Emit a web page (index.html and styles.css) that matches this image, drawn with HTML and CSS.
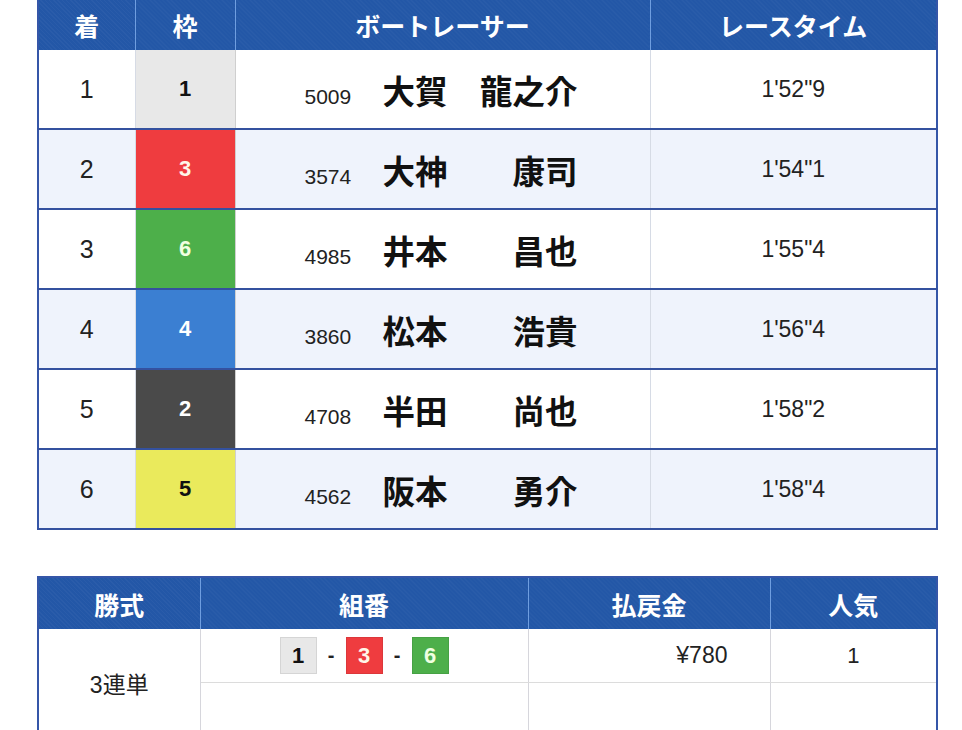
FILE: index.html
```html
<!DOCTYPE html>
<html lang="ja">
<head>
<meta charset="utf-8">
<title>レース結果</title>
<link rel="stylesheet" href="styles.css">
</head>
<body>
<main class="page">
  <table class="result">
    <colgroup>
      <col class="c-rank"><col class="c-boat"><col class="c-racer"><col class="c-time">
    </colgroup>
    <thead>
      <tr><th>着</th><th>枠</th><th>ボートレーサー</th><th>レースタイム</th></tr>
    </thead>
    <tbody>
      <tr>
        <td class="rank">1</td><td class="boat b1">1</td>
        <td class="racer"><span class="reg">5009</span><span class="name">大賀　龍之介</span></td>
        <td class="time">1'52"9</td>
      </tr>
      <tr class="alt">
        <td class="rank">2</td><td class="boat b3">3</td>
        <td class="racer"><span class="reg">3574</span><span class="name">大神　　康司</span></td>
        <td class="time">1'54"1</td>
      </tr>
      <tr>
        <td class="rank">3</td><td class="boat b6">6</td>
        <td class="racer"><span class="reg">4985</span><span class="name">井本　　昌也</span></td>
        <td class="time">1'55"4</td>
      </tr>
      <tr class="alt">
        <td class="rank">4</td><td class="boat b4">4</td>
        <td class="racer"><span class="reg">3860</span><span class="name">松本　　浩貴</span></td>
        <td class="time">1'56"4</td>
      </tr>
      <tr>
        <td class="rank">5</td><td class="boat b2">2</td>
        <td class="racer"><span class="reg">4708</span><span class="name">半田　　尚也</span></td>
        <td class="time">1'58"2</td>
      </tr>
      <tr class="alt">
        <td class="rank">6</td><td class="boat b5">5</td>
        <td class="racer"><span class="reg">4562</span><span class="name">阪本　　勇介</span></td>
        <td class="time">1'58"4</td>
      </tr>
    </tbody>
  </table>

  <table class="payout">
    <colgroup>
      <col class="p-type"><col class="p-combo"><col class="p-pay"><col class="p-pop">
    </colgroup>
    <thead>
      <tr><th>勝式</th><th>組番</th><th>払戻金</th><th>人気</th></tr>
    </thead>
    <tbody>
      <tr>
        <td class="type" rowspan="2">3連単</td>
        <td class="combo">
          <div class="combo-set">
            <span class="chip b1">1</span><span class="dash">-</span><span class="chip b3">3</span><span class="dash">-</span><span class="chip b6">6</span>
          </div>
        </td>
        <td class="pay">¥780</td>
        <td class="pop">1</td>
      </tr>
      <tr>
        <td class="combo"></td>
        <td class="pay"></td>
        <td class="pop"></td>
      </tr>
    </tbody>
  </table>
</main>
</body>
</html>
```

FILE: styles.css
```css
html, body {
  margin: 0;
  padding: 0;
  background: #ffffff;
}

body {
  font-family: "Liberation Sans", "Noto Sans CJK JP", sans-serif;
  color: #111111;
}

.page {
  padding: 0 25px 0 37px;
}

table {
  border-collapse: collapse;
  table-layout: fixed;
  width: 899px;
}

th {
  background-color: #2357a7;
  background-image: repeating-linear-gradient(45deg, rgba(255,255,255,0.03) 0 1px, transparent 1px 3px);
  color: #ffffff;
  font-family: "Noto Sans CJK JP", sans-serif;
  font-weight: 700;
  font-size: 25px;
  text-align: center;
  padding: 0;
  border-left: 1px solid #6f9ee0;
  border-right: 1px solid #6f9ee0;
}

th:first-child { border-left: 2px solid #3556a8; }
th:last-child { border-right: 2px solid #3556a8; }

/* result table */
.result {
  border: 2px solid #3556a8;
  border-top: none;
}

.result thead tr { height: 50px; }

.c-rank { width: 97px; }
.c-boat { width: 100px; }
.c-racer { width: 415px; }
.c-time { width: 287px; }

.result td {
  height: 78px;
  padding: 0;
  border-bottom: 2px solid #34519f;
  border-right: 1px solid #d6dbe5;
  text-align: center;
  vertical-align: middle;
  background: #ffffff;
}

.result tr.alt td { background: #eff3fc; }

.result td:last-child { border-right: 2px solid #3556a8; }

.rank {
  font-size: 25px;
  font-weight: 400;
  color: #222222;
}

.result td.boat {
  font-size: 22px;
  font-weight: 700;
  border-left: 1px solid #cfcfcf;
  border-right: 1px solid #cfcfcf;
}

.b1 { background: #e8e8e8 !important; color: #111111; }
.b2 { background: #4a4a4a !important; color: #ffffff; }
.b3 { background: #ef3c3f !important; color: #fff6e8; }
.b4 { background: #3b7fd2 !important; color: #ffffff; }
.b5 { background: #eaea5c !important; color: #111111; }
.b6 { background: #4daf4a !important; color: #f0ffe0; }

.result td.racer {
  text-align: left;
}

.racer {
  white-space: nowrap;
}

.reg {
  display: inline-block;
  width: 78px;
  margin-left: 69px;
  font-size: 21px;
  color: #222222;
}

.name {
  font-family: "Noto Sans CJK JP", sans-serif;
  font-weight: 700;
  font-size: 32.5px;
  color: #111111;
}

.time {
  font-size: 23px;
  color: #222222;
}

/* payout table */
.payout {
  margin-top: 46px;
  border: 2px solid #3556a8;
  border-bottom: none;
}

.payout thead tr { height: 52px; }

.p-type { width: 162px; }
.p-combo { width: 328px; }
.p-pay { width: 242px; }
.p-pop { width: 167px; }

.payout td {
  height: 53px;
  padding: 0;
  border-bottom: 1px solid #dcdcdc;
  border-right: 1px solid #d6d6dc;
  text-align: center;
  vertical-align: middle;
  font-size: 22px;
  color: #222222;
}

.payout td:last-child { border-right: 2px solid #3556a8; }

.payout td.type {
  font-size: 23px;
}

.combo-set {
  display: flex;
  justify-content: center;
  align-items: center;
}

.chip {
  display: inline-flex;
  align-items: center;
  justify-content: center;
  width: 37px;
  height: 37px;
  font-size: 22px;
  font-weight: 700;
  box-shadow: inset 0 0 0 1px rgba(0,0,0,0.08);
}

.dash {
  width: 29px;
  text-align: center;
  font-weight: 700;
  font-size: 20px;
  color: #222222;
}

.payout td.pay {
  text-align: right;
  padding-right: 42px;
  font-size: 23px;
}

.payout td.pop {
  text-align: center;
}
```
